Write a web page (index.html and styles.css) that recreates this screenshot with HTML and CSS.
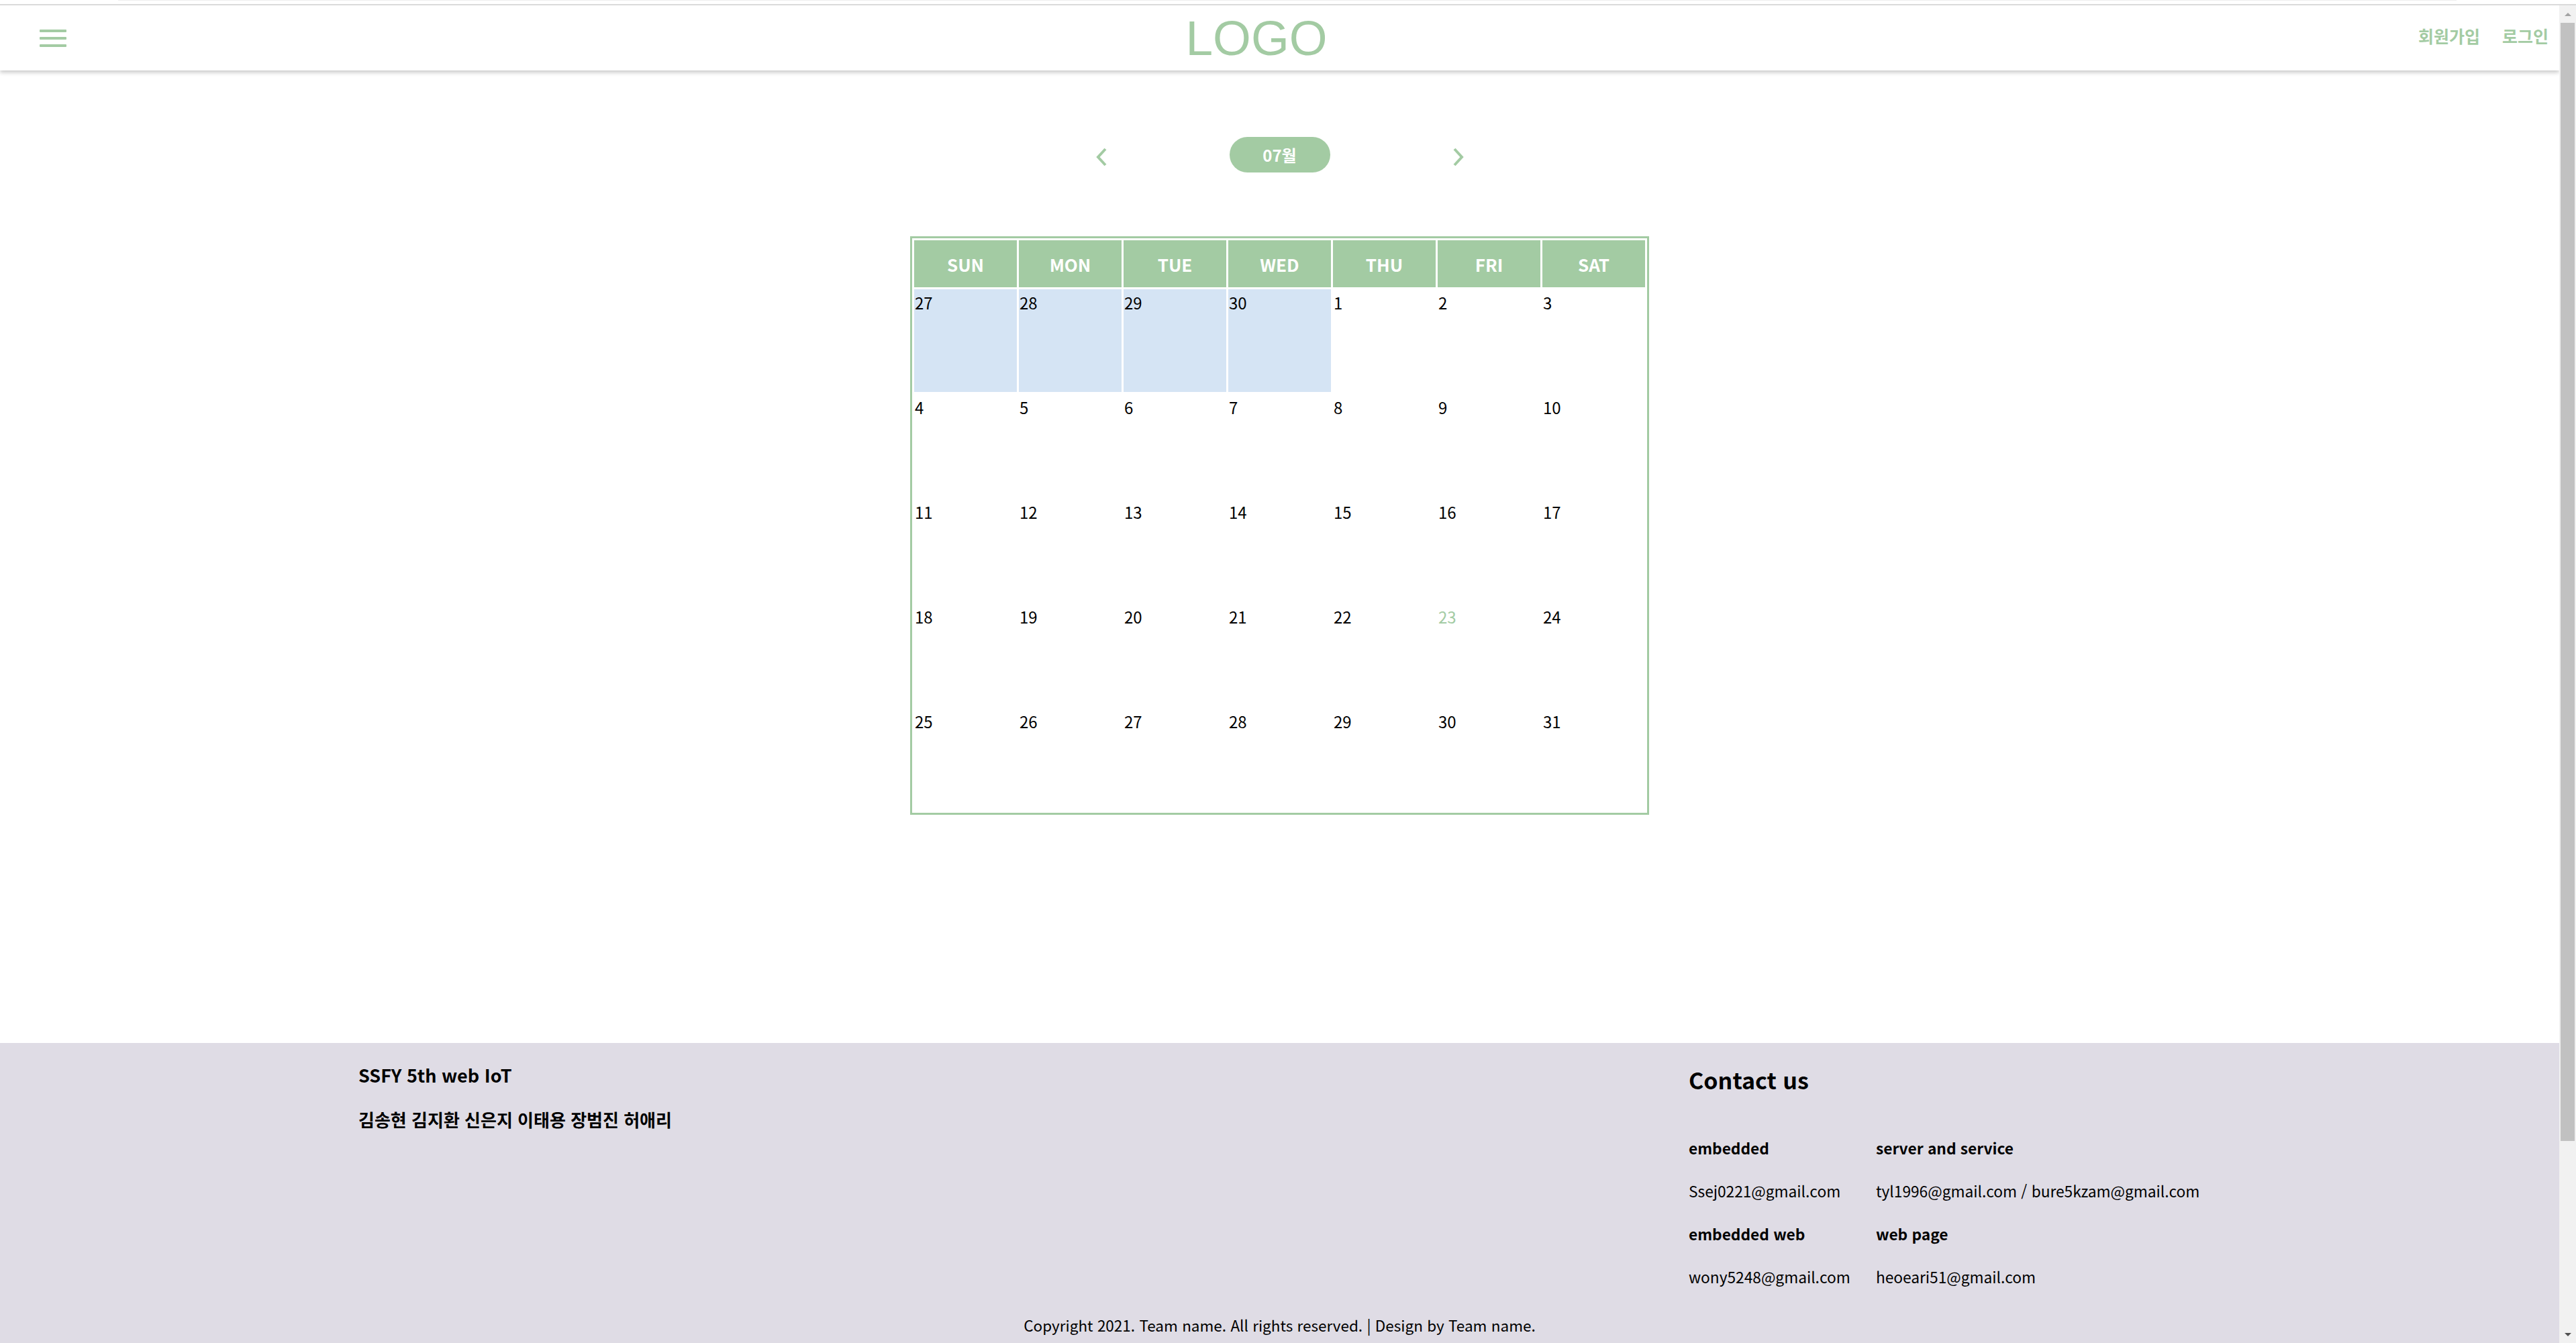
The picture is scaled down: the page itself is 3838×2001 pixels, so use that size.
FILE: index.html
```html
<!DOCTYPE html>
<html lang="ko">
<head>
<meta charset="utf-8">
<title>Calendar</title>
<link rel="stylesheet" href="styles.css">
</head>
<body>
<div class="chrome"><div class="chrome-tab"></div></div>
<div class="viewport">
  <div class="page">
    <header class="header">
      <button class="menu-btn" aria-label="menu">
        <svg width="40" height="26" viewBox="0 0 40 26"><rect x="0" y="0" width="40" height="4" rx="1" fill="#a3cba3"/><rect x="0" y="11" width="40" height="4" rx="1" fill="#a3cba3"/><rect x="0" y="22" width="40" height="4" rx="1" fill="#a3cba3"/></svg>
      </button>
      <div class="logo">LOGO</div>
      <nav class="auth">
        <a class="auth-link">회원가입</a>
        <a class="auth-link">로그인</a>
      </nav>
    </header>
    <main class="main">
      <div class="month-nav">
        <svg class="chev" width="18" height="28" viewBox="0 0 18 28"><polyline points="15,2 4,14 15,26" fill="none" stroke="#a3cba3" stroke-width="4"/></svg>
        <div class="month-pill">07월</div>
        <svg class="chev" width="18" height="28" viewBox="0 0 18 28"><polyline points="3,2 14,14 3,26" fill="none" stroke="#a3cba3" stroke-width="4"/></svg>
      </div>
      <div class="calendar">
        <div class="dow">SUN</div><div class="dow">MON</div><div class="dow">TUE</div><div class="dow">WED</div><div class="dow">THU</div><div class="dow">FRI</div><div class="dow">SAT</div>
        <div class="day prev">27</div><div class="day prev">28</div><div class="day prev">29</div><div class="day prev">30</div><div class="day">1</div><div class="day">2</div><div class="day">3</div>
        <div class="day">4</div><div class="day">5</div><div class="day">6</div><div class="day">7</div><div class="day">8</div><div class="day">9</div><div class="day">10</div>
        <div class="day">11</div><div class="day">12</div><div class="day">13</div><div class="day">14</div><div class="day">15</div><div class="day">16</div><div class="day">17</div>
        <div class="day">18</div><div class="day">19</div><div class="day">20</div><div class="day">21</div><div class="day">22</div><div class="day today">23</div><div class="day">24</div>
        <div class="day">25</div><div class="day">26</div><div class="day">27</div><div class="day">28</div><div class="day">29</div><div class="day">30</div><div class="day">31</div>
      </div>
    </main>
    <footer class="footer">
      <div class="footer-inner">
        <div class="team">
          <div class="team-title">SSFY 5th web IoT</div>
          <div class="team-names">김송현 김지환 신은지 이태용 장범진 허애리</div>
        </div>
        <div class="contact">
          <div class="contact-title">Contact us</div>
          <div class="contact-grid">
            <div class="c-label">embedded</div><div class="c-label">server and service</div>
            <div class="c-mail">Ssej0221@gmail.com</div><div class="c-mail">tyl1996@gmail.com / bure5kzam@gmail.com</div>
            <div class="c-label">embedded web</div><div class="c-label">web page</div>
            <div class="c-mail">wony5248@gmail.com</div><div class="c-mail">heoeari51@gmail.com</div>
          </div>
        </div>
      </div>
      <div class="copyright">Copyright 2021. Team name. All rights reserved. | Design by Team name.</div>
    </footer>
  </div>
  <div class="scrollbar">
    <div class="sb-btn"><span class="tri-up"></span></div>
    <div class="sb-thumb"></div>
    <div class="sb-track"></div>
    <div class="sb-btn"><span class="tri-down"></span></div>
  </div>
</div>
</body>
</html>
```

FILE: styles.css
```css
* { box-sizing: border-box; }
html, body {
  margin: 0;
  padding: 0;
  width: 3838px;
  height: 2001px;
  overflow: hidden;
  background: #fff;
  font-family: "Noto Sans CJK KR", "Noto Sans", sans-serif;
  color: #000;
}
.chrome {
  height: 8px;
  border-bottom: 2px solid #dadada;
  padding-left: 176px;
  padding-right: 178px;
}
.chrome-tab {
  height: 1px;
  background: #eeeeee;
}
.viewport {
  display: flex;
  height: 1993px;
}
.page {
  flex: 1;
  display: flex;
  flex-direction: column;
  overflow: hidden;
}
.header {
  height: 97px;
  flex: none;
  display: flex;
  align-items: center;
  justify-content: space-between;
  padding: 0 16px 0 59px;
  background: #fff;
  box-shadow: 0 3px 6px rgba(0, 0, 0, 0.22);
  position: relative;
  z-index: 1;
}
.menu-btn {
  border: 0;
  background: none;
  padding: 0;
  display: flex;
}
.logo {
  font-family: "Liberation Sans", Arial, sans-serif;
  font-size: 73px;
  line-height: 1;
  color: #a3cba3;
  margin-left: 42px;
}
.auth {
  display: flex;
  gap: 33px;
  margin-top: -8px;
}
.auth-link {
  font-size: 25px;
  font-weight: 700;
  color: #a3cba3;
}
.main {
  flex: 1;
  padding-top: 99px;
  display: flex;
  flex-direction: column;
  align-items: center;
}
.month-nav {
  display: flex;
  align-items: center;
  gap: 182px;
  height: 53px;
}
.chev {
  margin-top: 6px;
}
.month-pill {
  width: 150px;
  height: 53px;
  border-radius: 27px;
  background: #a3cba3;
  color: #fff;
  font-weight: 700;
  font-size: 24px;
  display: flex;
  align-items: center;
  justify-content: center;
}
.calendar {
  margin-top: 95px;
  display: grid;
  grid-template-columns: repeat(7, 153px);
  grid-auto-rows: 153px;
  grid-template-rows: 70px;
  gap: 3px;
  padding: 3px;
  border: 3px solid #a3cba3;
}
.dow {
  background: #a3cba3;
  color: #fff;
  font-weight: 700;
  font-size: 26px;
  display: flex;
  align-items: center;
  justify-content: center;
}
.day {
  font-size: 24px;
  padding: 2px 0 0 1px;
}
.day.prev {
  background: #d5e4f4;
}
.day.today {
  color: #a3cba3;
}
.footer {
  flex: none;
  height: 447px;
  background: #dfdce5;
  padding-top: 28px;
  display: flex;
  flex-direction: column;
}
.footer-inner {
  display: grid;
  grid-template-columns: 1982px auto;
  padding-left: 534px;
}
.team-title {
  font-size: 27px;
  font-weight: 700;
  line-height: 40px;
}
.team-names {
  margin-top: 26px;
  font-size: 26px;
  font-weight: 700;
  line-height: 40px;
}
.contact-title {
  margin-top: 2px;
  font-size: 34px;
  font-weight: 700;
  line-height: 50px;
  margin-bottom: 45px;
}
.contact-grid {
  display: grid;
  grid-template-columns: 243px auto;
  column-gap: 36px;
  grid-auto-rows: 64px;
  line-height: 64px;
  font-size: 22.7px;
}
.c-label {
  font-weight: 700;
}
.copyright {
  margin-top: 19px;
  text-align: center;
  font-size: 22.5px;
  line-height: 40px;
}
.scrollbar {
  width: 25px;
  flex: none;
  background: #f1f1f1;
  display: flex;
  flex-direction: column;
}
.sb-btn {
  height: 26px;
  display: flex;
  align-items: center;
  justify-content: center;
}
.tri-up {
  width: 0;
  height: 0;
  border-left: 5px solid transparent;
  border-right: 5px solid transparent;
  border-bottom: 5px solid #a3a3a3;
}
.tri-down {
  width: 0;
  height: 0;
  border-left: 5px solid transparent;
  border-right: 5px solid transparent;
  border-top: 5px solid #505050;
}
.sb-thumb {
  height: 1666px;
  margin: 0 2px;
  background: #c1c1c1;
}
.sb-track {
  flex: 1;
}
```
